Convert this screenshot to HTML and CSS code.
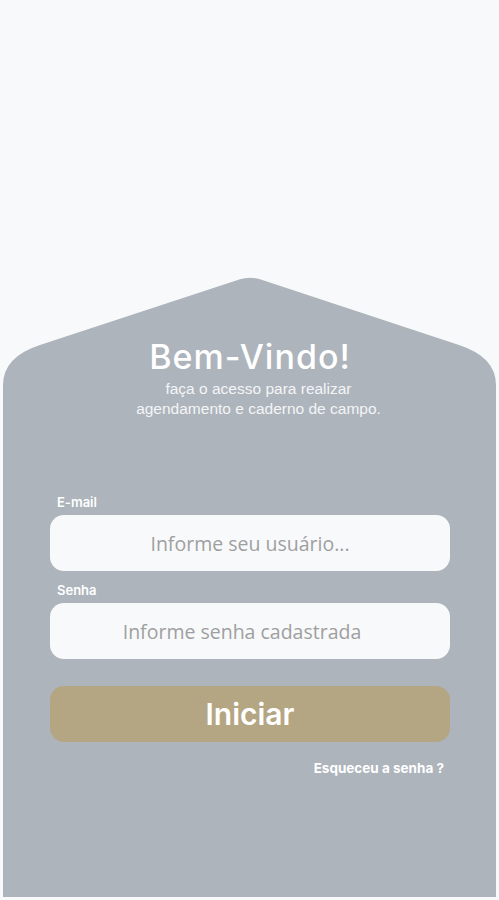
FILE: index.html
```html
<!DOCTYPE html>
<html lang="pt-BR">
<head>
<meta charset="utf-8">
<title>Login</title>
<link rel="stylesheet" href="styles.css">
</head>
<body>
<main class="card">
  <header class="intro">
    <h1 class="title">Bem-Vindo!</h1>
    <p class="subtitle">faça o acesso para realizar<br>agendamento e caderno de campo.</p>
  </header>
  <form class="form">
    <label class="field">
      <span class="label">E-mail</span>
      <input class="input" type="text" placeholder="Informe seu usuário...">
    </label>
    <label class="field">
      <span class="label">Senha</span>
      <input class="input input-password" type="password" placeholder="Informe senha cadastrada">
    </label>
    <button class="btn" type="button">Iniciar</button>
    <a class="forgot" href="#">Esqueceu a senha ?</a>
  </form>
</main>
</body>
</html>
```
FILE: styles.css
```css
* { box-sizing: border-box; }
html, body { margin: 0; padding: 0; }
body {
  background: #f8f9fb;
  height: 900px;
  overflow: hidden;
  font-family: Inter, "Liberation Sans", sans-serif;
}
.card {
  margin: 275px 3px 0;
  height: 622px;
  background: #adb4bc;
  clip-path: path("M 0 110 Q 0 82 37 70 L 237 4.3 Q 247 1 257 4.3 L 456 70 Q 493 82 493 110 L 493 622 L 0 622 Z");
  padding: 62px 46px 0 47px;
  display: flex;
  flex-direction: column;
}
.intro {
  text-align: center;
  color: #ffffff;
}
.title {
  margin: 0;
  font-family: Inter, sans-serif;
  font-weight: 500;
  font-size: 34px;
  line-height: 40px;
  letter-spacing: 1px;
}
.subtitle {
  margin: 2px 0 0;
  padding-left: 17px;
  font-family: "Liberation Sans", Arial, sans-serif;
  font-size: 15.5px;
  line-height: 20px;
  color: #f4f5f7;
}
.form {
  margin-top: 75px;
  display: flex;
  flex-direction: column;
}
.field {
  display: flex;
  flex-direction: column;
  margin-bottom: 11px;
}
.label {
  font-family: Inter, sans-serif;
  font-weight: 600;
  font-size: 13px;
  line-height: 16px;
  color: #ffffff;
  padding-left: 7px;
  margin-bottom: 5px;
}
.input {
  height: 56px;
  border: none;
  border-radius: 14px;
  background: #f8f9fb;
  text-align: center;
  font-family: "Open Sans", sans-serif;
  font-size: 19.5px;
  color: #555;
  outline: none;
}
.input-password { padding-right: 18px; }
.input::placeholder { color: #9f9f9f; }
.btn {
  margin-top: 16px;
  height: 56px;
  border: none;
  border-radius: 14px;
  background: #b5a683;
  color: #ffffff;
  font-family: Inter, sans-serif;
  font-weight: 600;
  font-size: 30px;
}
.forgot {
  align-self: flex-end;
  margin-top: 17px;
  margin-right: 6px;
  font-family: Inter, sans-serif;
  font-weight: 700;
  font-size: 13.5px;
  line-height: 18px;
  color: #ffffff;
  text-decoration: none;
}
```
